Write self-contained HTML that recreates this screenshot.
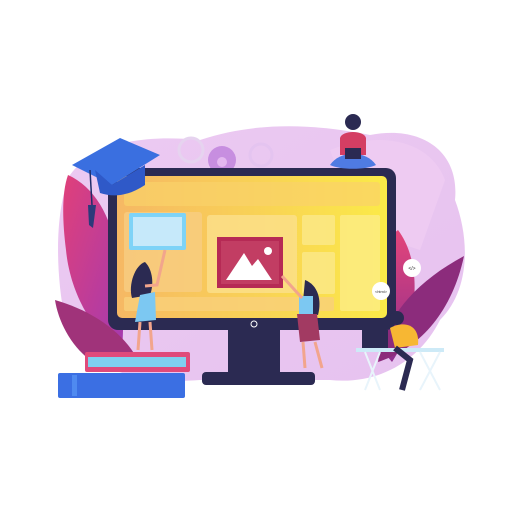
<!DOCTYPE html>
<html><head><meta charset="utf-8"><style>html,body{margin:0;padding:0;background:#fff}svg{display:block}</style></head>
<body>
<svg width="512" height="512" viewBox="0 0 512 512" xmlns="http://www.w3.org/2000/svg">
<defs>
<linearGradient id="scr" x1="0" y1="0" x2="1" y2="0"><stop offset="0" stop-color="#f6b864"/><stop offset="1" stop-color="#fbea48"/></linearGradient>
<linearGradient id="blob" x1="0" y1="0" x2="1" y2="1"><stop offset="0" stop-color="#eccaf2"/><stop offset="1" stop-color="#e6c2ef"/></linearGradient>
<linearGradient id="leafL" x1="0" y1="0" x2="1" y2="1"><stop offset="0" stop-color="#e0407a"/><stop offset="1" stop-color="#a43ab0"/></linearGradient>
<linearGradient id="leafR" x1="0" y1="0" x2="0" y2="1"><stop offset="0" stop-color="#e4457a"/><stop offset="1" stop-color="#8e2e8e"/></linearGradient>
</defs>
<path d="M70 175 C95 140 150 135 200 140 C260 120 320 125 370 135 C420 125 460 150 455 200 C470 240 470 290 440 320 C420 360 380 385 330 380 L200 380 C140 385 80 370 65 320 C55 270 55 210 70 175Z" fill="url(#blob)"/>
<path d="M330 150 C380 130 430 140 445 180 L420 250 L360 230Z" fill="#eecbf2"/>
<circle cx="191" cy="150" r="12" fill="none" stroke="#e6d3ef" stroke-width="3"/>
<circle cx="222" cy="160" r="14" fill="#c78ee0"/><circle cx="222" cy="162" r="5" fill="#e3b7ef"/>
<circle cx="261" cy="155" r="11" fill="none" stroke="#e4c4f0" stroke-width="3"/>
<path d="M68 175 C112 195 128 260 122 352 C92 332 70 292 66 250 C62 218 62 192 68 175Z" fill="url(#leafL)"/>
<path d="M55 300 C90 310 120 330 135 355 L90 360 C70 345 58 320 55 300Z" fill="#a0337a"/>
<path d="M398 230 C422 262 420 320 392 362 C368 335 360 298 372 265 C380 248 388 238 398 230Z" fill="url(#leafR)"/>
<path d="M464 256 C452 312 420 348 378 362 C384 320 412 284 464 256Z" fill="#8c2c7c"/>
<rect x="108" y="168" width="288" height="162" rx="10" fill="#2b2a52"/>
<rect x="117" y="176" width="270" height="142" rx="5" fill="url(#scr)"/>
<rect x="124" y="182" width="256" height="24" rx="3" fill="#f9d26a" opacity=".7"/>
<rect x="124" y="212" width="78" height="80" rx="3" fill="#f8cd82" opacity=".8"/>
<rect x="207" y="215" width="90" height="78" rx="3" fill="#fbe08c" opacity=".8"/>
<rect x="302" y="215" width="33" height="30" rx="2" fill="#fbe88a" opacity=".8"/>
<rect x="302" y="252" width="33" height="42" rx="2" fill="#fbe88a" opacity=".8"/>
<rect x="340" y="215" width="40" height="96" rx="2" fill="#fcec86" opacity=".8"/>
<rect x="124" y="297" width="210" height="14" rx="2" fill="#f9d07a" opacity=".8"/>
<circle cx="254" cy="324" r="3" fill="none" stroke="#fff" stroke-width="1"/>
<rect x="228" y="330" width="52" height="42" fill="#2b2a52"/>
<rect x="202" y="372" width="113" height="13" rx="4" fill="#2b2a52"/>
<rect x="129" y="213" width="57" height="37" rx="2" fill="#7ed3f7"/>
<rect x="133" y="217" width="49" height="29" fill="#c6e9fa"/>
<rect x="217" y="237" width="66" height="51" fill="#b62a55"/>
<rect x="221" y="241" width="58" height="43" fill="#c23d63"/>
<path d="M226 280 L244 253 L252 266 L258 259 L272 280Z" fill="#fff"/>
<circle cx="268" cy="251" r="4" fill="#fff"/>
<path d="M72 165 L120 138 L160 155 L112 185Z" fill="#3a6fe0"/>
<path d="M95 170 L100 193 C115 198 130 195 145 185 L145 165 L112 185Z" fill="#2f59c8"/>
<path d="M90 170 L92 205" stroke="#1e2c6a" stroke-width="1.5"/>
<path d="M88 205 L96 205 L93 228 L89 225Z" fill="#2b3a7a"/>
<rect x="58" y="373" width="127" height="25" rx="2" fill="#3b6fe3"/>
<rect x="72" y="375" width="5" height="21" fill="#4f8af0"/>
<rect x="85" y="352" width="105" height="20" rx="2" fill="#e04a7a"/>
<rect x="88" y="357" width="98" height="10" fill="#7fd0ef"/>
<path d="M145 262 C135 265 128 285 132 298 L150 295 C154 285 153 270 145 262Z" fill="#2b2a52"/>
<path d="M140 295 L155 292 L156 320 L135 322Z" fill="#7cc8f2"/>
<path d="M145 286 L157 285 L165 250" stroke="#f2a58c" stroke-width="3" fill="none"/>
<path d="M140 322 L138 350 M150 322 L152 350" stroke="#f2a58c" stroke-width="3"/>
<path d="M305 280 C318 285 322 300 318 315 L302 312Z" fill="#2b2a52"/>
<rect x="299" y="296" width="14" height="18" fill="#7cc8f2"/>
<path d="M297 314 L317 314 L320 340 L300 342Z" fill="#a23a62"/>
<path d="M303 342 L305 368 M315 342 L322 368" stroke="#f2a58c" stroke-width="3"/>
<path d="M302 298 L282 276" stroke="#f2a58c" stroke-width="3"/>
<circle cx="353" cy="122" r="8" fill="#2b2a52"/>
<path d="M340 138 C342 130 364 130 366 138 L366 155 L340 155Z" fill="#d43e63"/>
<path d="M330 165 C340 150 366 150 376 165 C366 170 340 170 330 165Z" fill="#4f7be3"/>
<rect x="345" y="148" width="16" height="11" fill="#2b2a52"/>
<circle cx="397" cy="318" r="7" fill="#2b2a52"/>
<path d="M390 328 C405 320 420 325 418 345 L395 348Z" fill="#f7b733"/>
<rect x="362" y="330" width="26" height="18" fill="#2b2a52"/>
<rect x="356" y="348" width="88" height="4" fill="#cdeaf7"/>
<path d="M365 352 L380 390 M380 352 L365 390 M420 352 L440 390 M440 352 L420 390" stroke="#e8f4fb" stroke-width="2"/>
<path d="M395 348 L410 360 L402 390" stroke="#2b2a52" stroke-width="6" fill="none"/>
<circle cx="381" cy="291" r="9" fill="#fff"/><text x="381" y="293" font-family="Liberation Sans" font-size="4" text-anchor="middle" fill="#333">&lt;html&gt;</text>
<circle cx="412" cy="268" r="9" fill="#fff"/><text x="412" y="270" font-family="Liberation Sans" font-size="5" text-anchor="middle" fill="#333">&lt;/&gt;</text>
</svg>
</body></html>
